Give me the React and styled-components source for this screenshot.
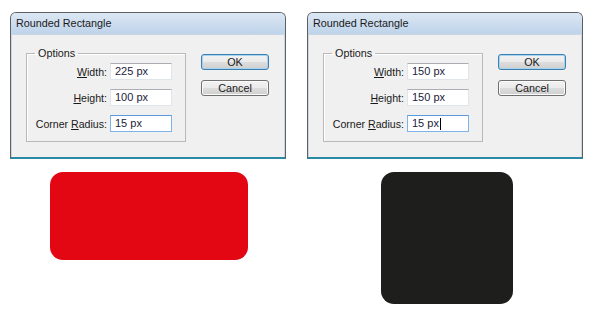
import React from 'react';
import styled, { createGlobalStyle } from 'styled-components';

const GlobalStyle = createGlobalStyle`
  html, body {
    margin: 0;
    padding: 0;
    background: #ffffff;
  }
  body {
    font-family: "Liberation Sans", Arial, sans-serif;
    width: 600px;
    height: 313px;
    overflow: hidden;
  }
`;

const Page = styled.div`
  display: flex;
  flex-direction: column;
`;

const DialogRow = styled.div`
  display: flex;
  gap: 21px;
  padding: 12px 0 0 10px;
`;

const Dialog = styled.div`
  width: 276px;
  height: 147px;
  box-sizing: border-box;
  border: 1px solid #5b6067;
  border-bottom: 2px solid #2a89a5;
  border-radius: 6px 6px 0 0;
  background: #f0f0f0;
  display: flex;
  flex-direction: column;
  box-shadow: inset 1px 0 0 #cfd6de, inset -1px 0 0 #cfd6de;
`;

const TitleBar = styled.div`
  height: 21px;
  line-height: 21px;
  padding-left: 5px;
  font-size: 10.8px;
  color: #1a1a1a;
  background: linear-gradient(#dce7f3, #bed3ea);
  border-radius: 5px 5px 0 0;
  border-bottom: 1px solid #c9d6e4;
`;

const DialogBody = styled.div`
  display: flex;
  align-items: flex-start;
  padding: 0 0 0 15px;
`;

const Group = styled.fieldset`
  margin: 12px 0 0 0;
  width: 160px;
  box-sizing: border-box;
  border: 1px solid #b9b9b9;
  box-shadow: 1px 1px 0 #ffffff inset;
  padding: 4px 13px 9px 0;
  min-width: 0;
`;

const Legend = styled.legend`
  margin-left: 8px;
  padding: 0 3px;
  font-size: 10.8px;
  line-height: 12px;
  color: #1a1a1a;
`;

const Row = styled.div`
  display: flex;
  justify-content: flex-end;
  align-items: center;
  gap: 3px;
  height: 17px;
  margin-bottom: 9px;

  &:last-child {
    margin-bottom: 0;
  }
`;

const Label = styled.span`
  font-size: 10.6px;
  color: #1a1a1a;

  u {
    text-decoration: underline;
    text-underline-offset: 1px;
  }
`;

const Field = styled.div`
  width: 62px;
  height: 17px;
  box-sizing: border-box;
  background: #ffffff;
  border: 1px solid ${p => (p.$focused ? '#7db3e8' : '#e0e5ea')};
  border-top-color: ${p => (p.$focused ? '#5a9ad8' : '#abadb3')};
  padding-left: 4px;
  font-size: 11px;
  line-height: 15px;
  color: #1c1c3a;
  display: flex;
  align-items: center;
`;

const Caret = styled.span`
  display: inline-block;
  width: 1px;
  height: 12px;
  background: #000000;
  margin-left: 1px;
`;

const Buttons = styled.div`
  display: flex;
  flex-direction: column;
  gap: 10px;
  margin: 19px 0 0 15px;
`;

const Button = styled.div`
  width: 68px;
  height: 16px;
  box-sizing: border-box;
  border: 1px solid ${p => (p.$default ? '#3c7fb1' : '#707070')};
  border-radius: 3px;
  background: linear-gradient(#f2f2f2 0%, #ebebeb 48%, #dddddd 52%, #cfcfcf 100%);
  box-shadow: ${p =>
    p.$default ? 'inset 0 0 0 1px #a6d3f0' : 'inset 0 0 0 1px #fbfbfb'};
  font-size: 10.8px;
  line-height: 14px;
  text-align: center;
  color: #1a1a1a;
`;

const ShapeRow = styled.div`
  display: flex;
  align-items: flex-start;
  gap: 133px;
  padding: 13px 0 0 50px;
`;

const Shape = styled.div`
  width: ${p => p.$w}px;
  height: ${p => p.$h}px;
  border-radius: 13px;
  background: ${p => p.$color};
`;

const dialogs = [
  { width: '225 px', height: '100 px', radius: '15 px', caret: false },
  { width: '150 px', height: '150 px', radius: '15 px', caret: true },
];

const RectDialog = ({ d }) => (
  <Dialog>
    <TitleBar>Rounded Rectangle</TitleBar>
    <DialogBody>
      <Group>
        <Legend>Options</Legend>
        <Row>
          <Label><u>W</u>idth:</Label>
          <Field>{d.width}</Field>
        </Row>
        <Row>
          <Label><u>H</u>eight:</Label>
          <Field>{d.height}</Field>
        </Row>
        <Row>
          <Label>Corner <u>R</u>adius:</Label>
          <Field $focused>
            {d.radius}
            {d.caret && <Caret />}
          </Field>
        </Row>
      </Group>
      <Buttons>
        <Button $default>OK</Button>
        <Button>Cancel</Button>
      </Buttons>
    </DialogBody>
  </Dialog>
);

const App = () => (
  <Page>
    <GlobalStyle />
    <DialogRow>
      {dialogs.map((d, i) => (
        <RectDialog key={i} d={d} />
      ))}
    </DialogRow>
    <ShapeRow>
      <Shape $w={198} $h={88} $color="#e30613" />
      <Shape $w={132} $h={132} $color="#1e1e1c" />
    </ShapeRow>
  </Page>
);

export default App;
